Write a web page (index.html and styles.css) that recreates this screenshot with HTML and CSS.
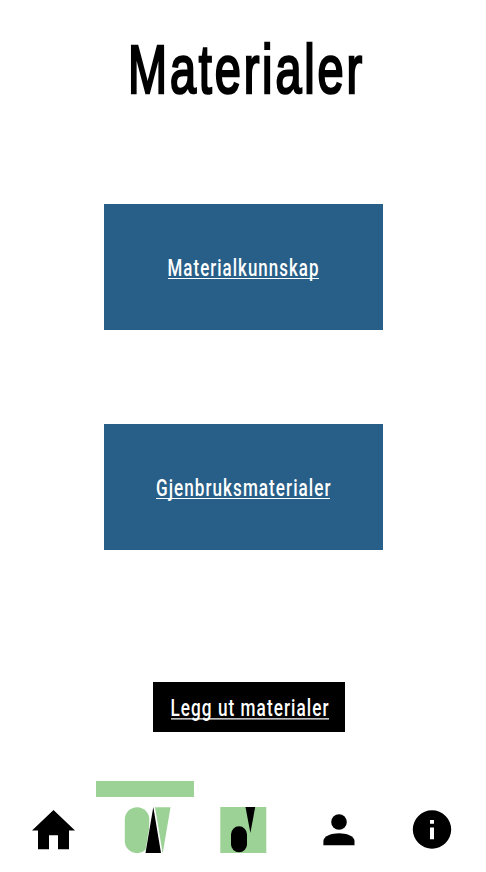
FILE: index.html
```html
<!DOCTYPE html>
<html lang="no">
<head>
<meta charset="utf-8">
<title>Materialer</title>
<link rel="stylesheet" href="styles.css">
</head>
<body>
<main class="page">
  <h1 class="title"><svg width="250" height="84" viewBox="0 0 250 84"><text class="title-text" x="8" y="68" textLength="237" lengthAdjust="spacingAndGlyphs">Materialer</text></svg></h1>
  <a class="card"><svg width="151" height="30" viewBox="0 0 151 30"><text class="label" x="-.5" y="21.8" textLength="152" lengthAdjust="spacingAndGlyphs">Materialkunnskap</text><path class="underline" d="M0 24.5h151"/></svg></a>
  <a class="card card-second"><svg width="175" height="30" viewBox="0 0 175 30"><text class="label" x="0" y="21.8" textLength="175.5" lengthAdjust="spacingAndGlyphs">Gjenbruksmaterialer</text><path class="underline" d="M0 24.5h174"/></svg></a>
  <a class="publish"><svg width="158" height="30" viewBox="0 0 158 30"><text class="label" x="-.5" y="22.3" textLength="159" lengthAdjust="spacingAndGlyphs">Legg ut materialer</text><path class="underline" d="M0 24.9h158"/></svg></a>
</main>
<nav class="nav">
  <div class="marker"></div>
  <div class="icons">
    <svg class="home" width="43" height="40" viewBox="0 0 43 40"><path d="M21.5 0 43 20.5H37V39.3H26V25.2H17V39.3H6V20.5H0Z"/></svg>
    <svg class="brand" width="47" height="47" viewBox="0 0 47 47"><rect class="green" x=".8" y=".2" width="24.5" height="46" rx="12.25"/><path class="green" d="M31 .2H46.5L38.7 46.5Z"/><path class="cutout" d="M29.3 0 37 46H21.5Z"/></svg>
    <svg class="reuse" width="47" height="47" viewBox="0 0 47 47"><path class="green" d="M.3 0H46.3V46H.3Z"/><rect x="11" y="19.3" width="16" height="26" rx="8"/><path d="M25.5 0H35.2L30.4 26Z"/></svg>
    <svg class="person" width="32" height="32" viewBox="0 0 32 32"><circle cx="16" cy="8" r="7.8"/><path d="M.4 31.2V27C.4 22 9 19.3 16 19.3S31.5 22 31.5 27V31.2Z"/></svg>
    <svg class="info" width="39" height="39" viewBox="0 0 39 39"><path fill-rule="evenodd" d="M20 .3a19.2 19.2 0 1 0 0 38.4 19.2 19.2 0 0 0 0-38.4ZM18 10h4v3.8h-4ZM18 17.5h4V29.2h-4Z"/></svg>
  </div>
</nav>
</body>
</html>
```

FILE: styles.css
```css
* { box-sizing: border-box; }
body {
  margin: 0;
  width: 486px;
  height: 872px;
  overflow: hidden;
  background: #fff;
  font-family: Roboto, sans-serif;
}
svg { display: block; overflow: visible; }
.page {
  height: 781px;
  padding-top: 25px;
  display: flex;
  flex-direction: column;
  align-items: center;
}
.title {
  margin: 0 0 95px 3px;
  height: 84px;
}
.title-text {
  font-family: "Liberation Sans", sans-serif;
  font-size: 69px;
  font-weight: 400;
  letter-spacing: 4.2px;
  stroke: #000;
  stroke-width: 2.6;
}
.card {
  width: 279px;
  height: 126px;
  display: flex;
  justify-content: center;
  padding-top: 50px;
  background: #285f88;
}
.card-second { margin-top: 94px; }
.label {
  font-size: 23px;
  font-weight: 500;
  letter-spacing: 1.4px;
  fill: #fff;
}
.underline { stroke: #fff; stroke-width: 1.2; }
.publish {
  width: 191.5px;
  height: 50px;
  margin: 132.4px 0 0 12px;
  padding: 11.6px 0 0 1px;
  display: flex;
  justify-content: center;
  background: #000;
}
.marker {
  width: 98px;
  height: 16px;
  margin-left: 96px;
  background: #9cd296;
}
.icons {
  display: flex;
  align-items: flex-start;
  padding: 10px 0 0 32px;
}
.home { margin-top: 3px; }
.brand { margin-left: 49px; }
.reuse { margin-left: 49px; }
.person { margin: 7px 0 0 56px; }
.info { margin: 3px 0 0 57px; }
.green { fill: #9cd296; }
.cutout { stroke: #fff; stroke-width: 1; paint-order: stroke; }
```
